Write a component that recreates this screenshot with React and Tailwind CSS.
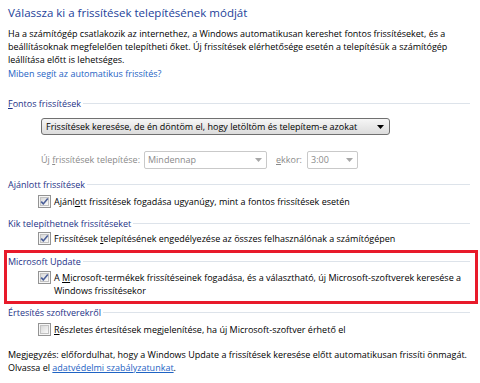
import React from "react";

const F = { fontFamily: '"Open Sans", "Noto Sans", sans-serif' };

function Check({ checked = true }) {
  return (
    <svg width="13" height="13" viewBox="0 0 13 13" className="shrink-0">
      <defs>
        <linearGradient id="cbg" x1="0" y1="0" x2="1" y2="1">
          <stop offset="0" stopColor="#d6d6d6" />
          <stop offset="1" stopColor="#fcfcfc" />
        </linearGradient>
      </defs>
      <rect x="0.5" y="0.5" width="12" height="12" fill="#f6f6f6" stroke="#939393" />
      <rect x="2.5" y="2.5" width="8" height="8" fill="url(#cbg)" stroke="#c2c2c2" strokeWidth="1" />
      {checked && (
        <path d="M3.2 6.6 L5.3 8.9 L9.8 3.4" fill="none" stroke="#4a5e98" strokeWidth="1.6" />
      )}
    </svg>
  );
}

function Header({ children }) {
  return (
    <div className="flex items-center h-[13px] leading-[13px] text-[#1e3287]">
      <span className="whitespace-nowrap">{children}</span>
      <div className="flex-1 h-px bg-[#dde3ea] ml-[2px]" />
    </div>
  );
}

function CheckRow({ checked = true, children, className = "" }) {
  return (
    <div className={"flex items-start pl-[30px] " + className}>
      <div className="pt-0">
        <Check checked={checked} />
      </div>
      <div className="ml-[3px] leading-[13px] text-black">{children}</div>
    </div>
  );
}

export default function App() {
  return (
    <div
      className="w-[480px] h-[383px] bg-white overflow-hidden pl-[8px] pr-[10px] text-[9px] text-black"
      style={F}
    >
      <div className="pt-[4px] h-[22px] leading-[18px] text-[11.5px] text-[#1d3f9a] whitespace-nowrap">
        Válassza ki a frissítések telepítésének módját
      </div>
      <div className="mt-[5px] leading-[13px] whitespace-nowrap">
        Ha a számítógép csatlakozik az internethez, a Windows automatikusan kereshet fontos frissítéseket, és a
        <br />
        beállításoknak megfelelően telepítheti őket. Új frissítések elérhetősége esetén a telepítésük a számítógép
        <br />
        leállítása előtt is lehetséges.
      </div>
      <div className="mt-[1px] leading-[13px] text-[#1e63c4]">Miben segít az automatikus frissítés?</div>

      <div className="mt-[17px]">
        <Header>
          <span className="underline">F</span>ontos frissítések
        </Header>
      </div>
      <div className="mt-[8px] ml-[33px] w-[349px] h-[17px] rounded-[3px] border border-[#707070] bg-gradient-to-b from-[#f6f6f6] to-[#dcdcdc] flex items-center pl-[4px] pr-[5px]">
        <span className="flex-1 whitespace-nowrap leading-[13px]">
          Frissítések keresése, de én döntöm el, hogy letöltöm és telepítem-e azokat
        </span>
        <svg width="7" height="4" viewBox="0 0 7 4">
          <path d="M0 0 H7 L3.5 4 Z" fill="#000" />
        </svg>
      </div>

      <div className="mt-[16px] ml-[33px] flex items-center h-[18px] text-[#8a8a8a]">
        <span className="whitespace-nowrap w-[103px]">
          Új <span className="underline">f</span>rissítések telepítése:
        </span>
        <div className="w-[123px] h-[18px] border border-[#c9c9c9] rounded-[2px] flex items-center pl-[3px] pr-[4px]">
          <span className="flex-1">Mindennap</span>
          <svg width="7" height="4" viewBox="0 0 7 4">
            <path d="M0 0 H7 L3.5 4 Z" fill="#a8a8a8" />
          </svg>
        </div>
        <span className="ml-[9px] w-[31px] whitespace-nowrap">
          <span className="underline">e</span>kkor:
        </span>
        <div className="w-[51px] h-[18px] border border-[#c9c9c9] rounded-[2px] flex items-center pl-[3px] pr-[4px]">
          <span className="flex-1">3:00</span>
          <svg width="7" height="4" viewBox="0 0 7 4">
            <path d="M0 0 H7 L3.5 4 Z" fill="#a8a8a8" />
          </svg>
        </div>
      </div>

      <div className="mt-[9px]">
        <Header>Ajánlott frissítések</Header>
      </div>
      <CheckRow className="mt-[4px]">
        Ajánl<span className="underline">o</span>tt frissítések fogadása ugyanúgy, mint a fontos frissítések esetén
      </CheckRow>

      <div className="mt-[9px]">
        <Header>Kik telepíthetnek frissítéseket</Header>
      </div>
      <CheckRow className="mt-[2px]">
        Frissítések <span className="underline">t</span>elepítésének engedélyezése az összes felhasználónak a számítógépen
      </CheckRow>

      <div className="mt-[5px] -ml-[4px] -mr-[8px] border-[3px] border-[#e81a2a] pl-[1px] pr-[5px] pt-[2px] pb-[4px]">
        <Header>Microsoft Update</Header>
        <CheckRow className="mt-[3px]">
          A <span className="underline">M</span>icrosoft-termékek frissítéseinek fogadása, és a választható, új Microsoft-szoftverek keresése a
          <br />
          Windows frissítésekor
        </CheckRow>
      </div>

      <div className="mt-[2px]">
        <Header>Értesítés szoftverekről</Header>
      </div>
      <CheckRow checked={false} className="mt-[4px]">
        <span className="underline">R</span>észletes értesítések megjelenítése, ha új Microsoft-szoftver érhető el
      </CheckRow>

      <div className="mt-[12px] leading-[13px] whitespace-nowrap">
        Megjegyzés: előfordulhat, hogy a Windows Update a frissítések keresése előtt automatikusan frissíti önmagát.
        <br />
        Olvassa el <span className="text-[#1e63c4] underline">adatvédelmi szabályzatunkat</span>.
      </div>
    </div>
  );
}
